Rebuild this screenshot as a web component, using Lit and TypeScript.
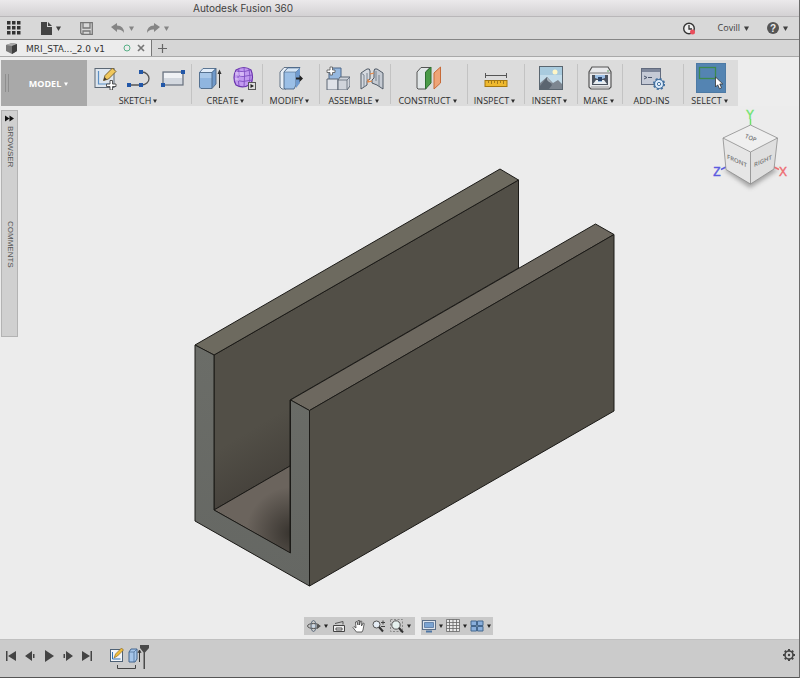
import { LitElement, html, css, svg, TemplateResult } from "lit";
import { customElement, property } from "lit/decorators.js";

const icon = (w: number, h: number, body: TemplateResult | TemplateResult[]) =>
  html`<svg width=${w} height=${h} viewBox="0 0 ${w} ${h}" aria-hidden="true">${body}</svg>`;

const caret = html`<svg class="caret" width="5" height="5" viewBox="0 0 5 5" aria-hidden="true"><path d="M0 .5h5L2.5 5z" fill="currentColor" /></svg>`;

const blueBox = svg`
  <path d="M1 6 5 2h13l-4 4v16l-2 1H2l-1-1z" fill="#a9c8e9" />
  <path d="M2 12h12v10H2z" fill="#8fb5df" />
  <path d="M1 6 5 2h13l-4 4z" fill="#e3eefa" />
  <path d="M14 6l4-4v16l-4 4z" fill="#6f99cb" />
  <path d="M1.500 6.500h12.500v16H3l-1.500-1.500zM1.500 6.500 5 2.500h13v15.500l-4 4.500M14 6.500l4-4" fill="none" stroke="#4d6887" stroke-width=".9" stroke-linejoin="round" />`;

const icons = {
  sketch: icon(24, 24, svg`
    <rect x="2" y="2.500" width="19" height="19" fill="#dfe6ee" stroke="#5c6875" />
    <path d="M5.500 5v13h12" fill="none" stroke="#5b8fc4" stroke-width="1.200" />
    <path d="M10.500 14.500l1.500-5 7.500-7.500 3.500 3.500-7.500 7.500z" fill="#f0c75c" stroke="#6f5726" stroke-width=".9" />
    <path d="M10.500 14.500l1-3.500 2.500 2.500z" fill="#473d30" />
    <path d="M17 14.500h2.500v3.500H23v2.500h-3.500V24H17v-3.500h-3.500V18H17z" fill="#fff" stroke="#444" stroke-width=".9" />`),
  arc: icon(24, 24, svg`
    <path d="M2 19h13a7 6.500 0 0 0 0-13" fill="none" stroke="#555" stroke-width="1.300" />
    <path d="M0 17h4v4H0zM12 17h4v4h-4zM12 4h4v4h-4z" fill="#2257a8" />`),
  rect: icon(24, 24, svg`
    <rect x="2" y="6" width="20" height="13" fill="#d3d8df" stroke="#666f7c" stroke-width="1.200" />
    <rect x="3" y="7" width="18" height="5" fill="#eff1f4" />
    <path d="M0 17h4v4H0zM20 4h4v4h-4z" fill="#2257a8" />`),
  extrude: icon(24, 24, svg`${blueBox}
    <path d="M21.500 22V5" stroke="#333" /><path d="M19.500 8l2-4.500 2 4.500z" fill="#333" />`),
  form: icon(24, 24, svg`
    <path d="M4 4q8-5 15 0 3 7 0 14-8 5-15 1-4-7 0-15z" fill="#c29af0" stroke="#6a35ad" stroke-width="1.200" />
    <path d="M2 9q9 3 18 0M2 14q9 3 18 0M7 2q-2 9 0 18M12 1q1 10 0 20M17 3q2 8 0 16M5 5q7 2 13-1" fill="none" stroke="#7f4fc2" stroke-width=".9" />
    <path d="M3 6h4v4H3zM8 6h4v4H8zM3 12h4v3H3z" fill="#e2cdfa" opacity=".6" />
    <rect x="16.500" y="16.500" width="7" height="7" fill="#ddd" stroke="#555" /><path d="M18.500 18v4l3.500-2z" fill="#222" />`),
  modify: icon(24, 24, svg`
    <path d="M1 6 5 1.500h6L7 6v17H3l-2-2z" fill="#e8eef5" stroke="#56667a" stroke-width=".9" />
    <path d="M5 6 9 1.500h12L17 6v13l-2 4H6l-1-1z" fill="#9bbfe6" stroke="#4a6586" stroke-width=".9" />
    <path d="M5 6 9 2h12l-4 4z" fill="#d5e5f6" stroke="#4a6586" stroke-width=".6" />
    <path d="M17 6l4-4v15l-4 5z" fill="#6f9ace" />
    <path d="M17 11.500h3.500V9l3.500 3.500-3.500 3.500v-2.500H17z" fill="#222" />`),
  component: icon(24, 24, svg`
    <path d="M3 5 6 2h9v10l-2 2H3z" fill="#96b8df" stroke="#4d6788" />
    <path d="M1 13h11v11H1z" fill="#dfe2e8" stroke="#5d6775" />
    <path d="M12 14l2-3h10v9l-3 4h-9z" fill="#d0d4db" stroke="#5d6775" />
    <path d="M12 14h9l3-3M21 14v9" fill="none" stroke="#5d6775" stroke-width=".8" />
    <path d="M4 1h2.500v3H9v2.500H6.500V9H4V6.500H1V4h3z" fill="#fff" stroke="#555" stroke-width=".8" />`),
  joint: icon(24, 24, svg`
    <path d="M1 7 7 3q3-1 3 2v8l-3 2v4l-6 4z" fill="#d5d9df" stroke="#505a66" />
    <path d="M1 7l3 2v12M7 15V7" fill="none" stroke="#7b8591" />
    <path d="M23 7l-6-4q-3-1-3 2v7l-2 2v3l5 2 6 4z" fill="#c6cbd3" stroke="#505a66" />
    <path d="M19 9v11M16 5v10" fill="none" stroke="#7b8591" />
    <path d="M10 8l4-1M8 13v3l4-1" fill="none" stroke="#e88743" stroke-width="1.200" />`),
  construct: icon(26, 24, svg`
    <path d="M1 6 5 1.500h9L10 6v17H2l-1-1z" fill="#e1e6e7" stroke="#555" />
    <path d="M9.500 6l5.500-5v16l-5.500 6z" fill="#4a9b48" stroke="#2c6f31" />
    <path d="M18 7l6.500-6v16L18 23z" fill="#eea477" stroke="#c66a38" />`),
  inspect: icon(24, 24, svg`
    <path d="M1 9.500h22M1.500 7v5M22.500 7v5" stroke="#555" fill="none" />
    <rect x="1" y="14.500" width="22" height="6" fill="#efb92e" stroke="#a5780f" />
    <path d="M4.500 15v2M7.500 15v3M10.500 15v2M13.500 15v3M16.500 15v2M19.500 15v3" stroke="#a37b1c" />`),
  insert: icon(24, 24, svg`
    <rect x=".5" y=".5" width="23" height="23" fill="#c3dcea" stroke="#5a6670" />
    <rect x="1" y="1" width="22" height="8" fill="#a9cbde" />
    <circle cx="16" cy="6" r="2.500" fill="#fff6c6" />
    <path d="M1 17l7-6 6 6 5-3 4 4v5H1z" fill="#7d8690" /><path d="M1 20l7-9 5 8-3 4H1z" fill="#5b6570" />
    <path d="M8 11l5 6-3-1-2-2z" fill="#a8b1b9" />`),
  make: icon(24, 24, svg`
    <path d="M4 1h16l3 5v15l-2 2H3l-2-2V6z" fill="#e8e9eb" stroke="#555" stroke-width="1.200" />
    <path d="M1 7h22" stroke="#777" /><circle cx="20" cy="5" r=".8" fill="#4b9b4b" />
    <path d="M4 9h16v10H4z" fill="#4b535e" /><path d="M5 18l3-4h8l3 4z" fill="#e9eef2" />
    <path d="M7 9h10v3l-3 1v3h-4v-3l-3-1z" fill="#9ec1e5" /><path d="M10 11h4v4h-4z" fill="#2b4468" />
    <path d="M3 21h18" stroke="#999" />`),
  addins: icon(24, 24, svg`
    <rect x=".5" y="2.500" width="19" height="16" fill="#c5cad6" stroke="#626b7e" /><path d="M1 3h18v3H1z" fill="#7e879b" />
    <path d="M3 10l3 1.500L3 13M7 11.500h4" fill="none" stroke="#4a556b" />
    <circle cx="18" cy="18" r="4.500" fill="#dcebfa" stroke="#43709f" stroke-width="1.200" />
    <circle cx="18" cy="18" r="5.200" fill="none" stroke="#43709f" stroke-width="1.800" stroke-dasharray="2.100 1.980" />
    <circle cx="18" cy="18" r="1.600" fill="#fff" stroke="#43709f" />`),
  select: icon(30, 30, svg`
    <rect x="3.500" y="4.500" width="16" height="11" fill="none" stroke="#3c8a4e" stroke-width="1.300" />
    <path d="M19.500 14v10l2.200-2.200 1.800 4 2-1-1.700-3.800h3z" fill="#fff" stroke="#333" stroke-width=".8" />`),
};

interface Tool { name: string; id: keyof typeof icons; on?: boolean }
interface Group { label: string; tools: Tool[]; menu?: boolean }

const groups: Group[] = [
  { label: "SKETCH", tools: [{ name: "Create sketch", id: "sketch" }, { name: "Line", id: "arc" }, { name: "Rectangle", id: "rect" }], menu: true },
  { label: "CREATE", tools: [{ name: "Extrude", id: "extrude" }, { name: "Create form", id: "form" }], menu: true },
  { label: "MODIFY", tools: [{ name: "Press pull", id: "modify" }], menu: true },
  { label: "ASSEMBLE", tools: [{ name: "New component", id: "component" }, { name: "Joint", id: "joint" }], menu: true },
  { label: "CONSTRUCT", tools: [{ name: "Offset plane", id: "construct" }], menu: true },
  { label: "INSPECT", tools: [{ name: "Measure", id: "inspect" }], menu: true },
  { label: "INSERT", tools: [{ name: "Decal", id: "insert" }], menu: true },
  { label: "MAKE", tools: [{ name: "3D print", id: "make" }], menu: true },
  { label: "ADD-INS", tools: [{ name: "Scripts and add-ins", id: "addins" }] },
  { label: "SELECT", tools: [{ name: "Select", id: "select", on: true }], menu: true },
];

const base = css`
  :host, * { box-sizing: border-box; }
  button {
    border: 0; margin: 0; padding: 0; background: none; color: inherit; font: inherit;
    display: flex; align-items: center; justify-content: center; cursor: default;
  }
  svg { display: block; flex: none; }
`;

@customElement("top-bar")
class TopBar extends LitElement {
  static styles = [base, css`
    :host { display: block; }
    .title {
      height: 17px; padding-left: 193px; border-bottom: 1px solid #b9b7b9;
      background: linear-gradient(#ebe9eb, #d3d1d3);
      font: 10px/17px "Inter", sans-serif; color: #3f3f3f;
    }
    .quick {
      height: 23px; padding: 0 11px 0 7px; display: flex; align-items: center;
      background: #d8d8d8; border-bottom: 1px solid #858585; color: #414141;
    }
    .quick button { gap: 4px; }
    .file { margin-left: 20px; }
    .save { margin-left: 19px; color: #777; }
    .undo { margin-left: 18px; color: #858585; }
    .redo { margin-left: 12px; color: #858585; }
    .clock { margin-left: auto; }
    .user { margin-left: 22px; font: 9px/12px "Open Sans", sans-serif; }
    .help { margin-left: 18px; }
    .tabs { height: 17px; display: flex; background: #d6d6d6; border-bottom: 1px solid #a9a9a9; }
    .tab {
      width: 152px; padding: 0 6px 0 5px; display: flex; align-items: center;
      background: #ececec; border-right: 1px solid #777; color: #333;
    }
    .name { margin: 2px auto 0 8px; font: 9px/14px "DejaVu Sans", sans-serif; white-space: nowrap; }
    .close { margin-left: 6px; }
    .new { width: 20px; }
  `];

  render() {
    return html`
      <header class="title">Autodesk Fusion 360</header>
      <nav class="quick" aria-label="Quick access">
        <button aria-label="Data panel">${icon(14, 14, svg`<path d="M0 0h3.500v3.500H0zM5 0h3.500v3.500H5zM10 0h3.500v3.500H10zM0 5h3.500v3.500H0zM5 5h3.500v3.500H5zM10 5h3.500v3.500H10zM0 10h3.500v3.500H0zM5 10h3.500v3.500H5zM10 10h3.500v3.500H10z" fill="#333" />`)}</button>
        <button class="file" aria-label="File">${icon(11, 13, svg`<path d="M0 0h6v5h5v8H0zM7 0l4 4H7z" fill="#444" />`)}${caret}</button>
        <button class="save" aria-label="Save">${icon(13, 13, svg`<path d="M.7.7h11.600v11.600H2L.7 11zM3 1v5h7V1M3 12V9h7v3" fill="none" stroke="#777" stroke-width="1.300" />`)}</button>
        <button class="undo" aria-label="Undo">${icon(14, 10, svg`<path d="M0 4l6-4v2.500q7 0 7 7.500-2-4-7-3.500V9z" fill="#858585" />`)}${caret}</button>
        <button class="redo" aria-label="Redo">${icon(14, 10, svg`<path d="M14 4L8 0v2.500Q1 2.500 1 10q2-4 7-3.500V9z" fill="#858585" />`)}${caret}</button>
        <button class="clock" aria-label="Job status">${icon(13, 13, svg`<circle cx="6" cy="6.500" r="5.300" fill="#eee" stroke="#333" stroke-width="1.400" /><path d="M6 3v4h3" fill="none" stroke="#333" stroke-width="1.300" /><circle cx="9.500" cy="10" r="2.500" fill="#e94f5c" />`)}</button>
        <button class="user">Covill ${caret}</button>
        <button class="help" aria-label="Help">${icon(12, 12, svg`<circle cx="6" cy="6" r="6" fill="#555" /><text x="6" y="9.500" text-anchor="middle" font-family="Liberation Sans" font-weight="bold" font-size="10" fill="#eee">?</text>`)}${caret}</button>
      </nav>
      <div class="tabs">
        <div class="tab">
          ${icon(13, 13, svg`<path d="M1 3l6-2 5 1v7l-5 3-6-3z" fill="#777" /><path d="M1 3l6-2 5 1-5 2z" fill="#aaa" /><path d="M7 4l5-2v7l-5 3z" fill="#3f3f3f" />`)}
          <span class="name">MRI_STA..._2.0 v1</span>
          ${icon(8, 8, svg`<circle cx="4" cy="4" r="3" fill="none" stroke="#58b087" />`)}
          <button class="close" aria-label="Close tab">${icon(8, 8, svg`<path d="M1 1l6 6M7 1L1 7" stroke="#777" stroke-width="1.700" />`)}</button>
        </div>
        <button class="new" aria-label="New tab">${icon(9, 9, svg`<path d="M4.500 0v9M0 4.500h9" stroke="#666" stroke-width="1.200" />`)}</button>
      </div>`;
  }
}

@customElement("tool-ribbon")
class ToolRibbon extends LitElement {
  static styles = [base, css`
    :host { display: block; padding: 3px 0 0 1px; background: #ededed; }
    .ribbon {
      width: max-content; height: 46px; display: grid; background: #dcdcdc;
      grid-template-columns: 86px 104px 71px 57px 71px 77px 57px 53px 45px 61px 55px;
      font: 9px/10px "Open Sans", sans-serif; color: #2c2c2c;
    }
    .mode {
      position: relative; background: #a9a9a9; color: #fff; gap: 3px; padding-left: 9px;
      font-weight: bold;
    }
    .grip { position: absolute; left: 4px; top: 14px; width: 4px; height: 18px; border: solid #8e8e8e; border-width: 0 1px; }
    .group { position: relative; display: flex; flex-direction: column; align-items: center; justify-content: space-between; padding-bottom: 1px; }
    .group + .group::before { content: ""; position: absolute; left: 0; top: 4px; bottom: 3px; width: 1px; background: #c3c3c3; }
    .tools { height: 36px; display: flex; gap: 10px; align-items: center; }
    .on { background: #5484b2; outline: 1px solid #4d7aa5; outline-offset: -1px; }
    .menu { height: 10px; gap: 2px; margin-right: 2px; }
    .caret { width: 4px; height: 4px; }
  `];

  render() {
    return html`<div class="ribbon" role="toolbar" aria-label="Model tools">
      <button class="mode"><span class="grip"></span>MODEL ${caret}</button>
      ${groups.map((g) => html`<div class="group">
        <div class="tools">${g.tools.map((t) => html`<button class=${t.on ? "on" : ""} aria-label=${t.name}>${icons[t.id]}</button>`)}</div>
        <button class="menu">${g.label}${g.menu ? caret : ""}</button>
      </div>`)}
    </div>`;
  }
}

@customElement("model-stage")
class ModelStage extends LitElement {
  static styles = [base, css`
    :host { display: flex; flex-direction: column; justify-content: space-between; position: relative; min-height: 460px; background: #ececec; }
    .rail {
      width: 17px; height: 227px; margin: 4px 0 0 1px; padding-top: 4px; position: relative; z-index: 1;
      display: flex; flex-direction: column; align-items: center;
      background: #d0d0d0; border: 1px solid #b3b3b3; color: #555;
      font: 8px/12px "Liberation Sans", sans-serif;
    }
    .rail button { writing-mode: vertical-rl; }
    .browser { margin-top: 4px; }
    .comments { margin-top: 54px; }
    .model { position: absolute; inset: 0; margin: auto; }
    .cube { position: absolute; top: 0; right: 9px; }
    .views { position: relative; z-index: 1; display: flex; justify-content: center; gap: 6px; padding: 0 3px 4px 0; color: #222; }
    .bar { height: 18px; display: flex; background: #c9c9c9; }
    .first { padding: 0 2px; }
    .bar button { width: 20px; gap: 3px; }
    .bar .drop { width: 24px; }
    .bar .tight { width: 23px; }
    .caret { width: 4px; height: 4px; }
  `];

  render() {
    const view = (name: string, cls: string, body: TemplateResult) =>
      html`<button class=${cls} aria-label=${name}>${icon(14, 14, body)}${cls ? caret : ""}</button>`;
    return html`
      <svg class="model" width="439" height="445" viewBox="180 150 439 445" role="img" aria-label="U-shaped channel model">
        <defs>
          <linearGradient id="inner" gradientUnits="userSpaceOnUse" x1="300" y1="400" x2="330" y2="450">
            <stop offset="0" stop-color="#524f47" /><stop offset="1" stop-color="#45413b" />
          </linearGradient>
          <radialGradient id="floor" gradientUnits="userSpaceOnUse" cx="292" cy="533" r="46">
            <stop offset="0" stop-color="#37332e" /><stop offset="1" stop-color="#6b645d" />
          </radialGradient>
          <linearGradient id="front" x1="0" y1="0" x2="0" y2="1">
            <stop offset="0" stop-color="#6b6d68" /><stop offset="1" stop-color="#656763" />
          </linearGradient>
        </defs>
        <g stroke="#1b1a17" stroke-width="1" stroke-linejoin="round">
          <path d="M214 355 518.500 180V268L290 400V466L214 510z" fill="url(#inner)" />
          <path d="M195 345 500 169 518.500 180 214 355z" fill="#6d6a5f" />
          <path d="M214 510 290 466V553z" fill="url(#floor)" />
          <path d="M290.500 400 595.500 224 614 234.500 309.500 410.500z" fill="#6d685f" />
          <path d="M309.500 410.500 614 234.500V411L309.500 586z" fill="#524f47" />
          <path d="M195 345 214 355V510L290.500 553V400L309.500 410.500V586L195 521z" fill="url(#front)" />
        </g>
      </svg>
      <svg class="cube" width="80" height="90" viewBox="710 106 80 90" role="img" aria-label="View cube">
        <defs><filter id="soft" x="-30%" y="-30%" width="160%" height="160%"><feGaussianBlur stdDeviation="2" /></filter></defs>
        <path d="M724 170 750 188 778 170 750 160z" fill="#8c8c8c" opacity=".75" filter="url(#soft)" />
        <path d="M750.500 125v-6" stroke="#6ee46e" stroke-width="1.500" />
        <path d="M726 167l-5 2.500" stroke="#5b5be0" stroke-width="1.500" />
        <path d="M774 167l5 2.500" stroke="#ee6a70" stroke-width="1.500" />
        <path d="M723 138 750.500 152V184L726 169.500z" fill="#e6e6e6" />
        <path d="M750.500 152 777.500 138 774 169 750.500 184z" fill="#dfdfdf" />
        <path d="M750.500 125 777.500 138 750.500 152 723 138z" fill="#efefef" />
        <path d="M750.500 125 777.500 138 774 169 750.500 184 726 169.500 723 138zM723 138l27.500 14 27-14M750.500 152v32" fill="none" stroke="#8b8b8b" stroke-width=".8" />
        <g font-family="Open Sans, sans-serif" font-size="6" font-weight="600" fill="#777" text-anchor="middle">
          <text transform="translate(737 163) skewY(24)">FRONT</text>
          <text transform="translate(763 163) skewY(-24)">RIGHT</text>
          <text transform="translate(750 140) rotate(22)">TOP</text>
        </g>
        <g font-family="Liberation Sans, sans-serif" font-size="12" text-anchor="middle" stroke-width=".4">
          <text x="750" y="119" fill="#6ee46e" stroke="#6ee46e">Y</text>
          <text x="717" y="176" fill="#5b5be0" stroke="#5b5be0">Z</text>
          <text x="783" y="176" fill="#ee6a70" stroke="#ee6a70">X</text>
        </g>
      </svg>
      <aside class="rail">
        ${icon(9, 7, svg`<path d="M0 .5l4.500 3L0 6.500zM4.500.5l4.500 3-4.500 3z" fill="#111" />`)}
        <button class="browser">BROWSER</button>
        <button class="comments">COMMENTS</button>
      </aside>
      <div class="views">
        <div class="bar first" role="toolbar" aria-label="Navigation">
          ${view("Orbit", "tight", svg`<ellipse cx="6.500" cy="7" rx="6" ry="2.500" fill="none" stroke="#555" /><ellipse cx="6.500" cy="7" rx="2.500" ry="5.500" fill="none" stroke="#5c6b7c" /><path d="M10 5l4 2-4 3z" fill="#555" /><circle cx="6.500" cy="7" r="1.500" fill="#c9d9ea" />`)}
          ${view("Look at", "", svg`<path d="M1.500 6.500h11v6h-11z" fill="#eee" stroke="#444" /><path d="M3 4.500l8-2v3M4 9h6v2H4z" fill="none" stroke="#555" />`)}
          ${view("Pan", "", svg`<path d="M4.500 13L1 8.500l1-1 2 1.500L3.500 3l1.200-.6L6 6V1.500h1.500V6l1-4 1.300.3L9.500 7l1.700-3 1 .5L11 11l-1 2z" fill="#fff" stroke="#444" stroke-width=".8" />`)}
          ${view("Zoom", "", svg`<circle cx="4.500" cy="5.500" r="3.500" fill="#e5edf5" stroke="#555" /><path d="M7 8l4 4.500" stroke="#333" stroke-width="2" /><path d="M9 3.500h4M11 1.500v4M9 7.500h4" stroke="#444" />`)}
          ${view("Fit", "drop", svg`<path d="M.5.5h12v12H.5z" fill="none" stroke="#888" stroke-dasharray="2 1.500" /><circle cx="6" cy="6" r="4.200" fill="#e5f0ee" stroke="#555" /><path d="M9 9l4 4.500" stroke="#333" stroke-width="2" />`)}
        </div>
        <div class="bar" role="toolbar" aria-label="Display">
          ${view("Display settings", "drop", svg`<rect x=".5" y="1.500" width="13" height="9" fill="#dce4ee" stroke="#5c6f88" /><path d="M2.500 3.500h9v5h-9z" fill="#7ba4d3" stroke="#496a95" stroke-width=".7" /><path d="M4 12.500h6" stroke="#4f76a5" stroke-width="2" />`)}
          ${view("Grid settings", "drop", svg`<path d="M.5.500h13v12H.5z" fill="#e9e9e9" /><path d="M.5.500h13v12H.5zM.5 3.500h13M.5 6.500h13M.5 9.500h13M3.500.5v12M7 .5v12M10.500.5v12" fill="none" stroke="#666" stroke-width=".8" />`)}
          ${view("Viewports", "drop", svg`<path d="M1 2h5.500v4.500H1zM7.500 2H13v4.500H7.500zM1 7.500h5.500V12H1zM7.500 7.500H13V12H7.500z" fill="#8aafdc" stroke="#45688f" />`)}
        </div>
      </div>`;
  }
}

@customElement("time-line")
class TimeLine extends LitElement {
  @property({ type: Number }) step = 2;

  static styles = [base, css`
    :host { height: 39px; display: flex; align-items: flex-start; padding: 3px 3px 0; background: #cbcbcb; border-bottom: 1px solid #555; border-top: 1px solid #c0c0c0; }
    .play { display: flex; gap: 3px; margin-top: 5px; }
    .play button { width: 16px; height: 16px; }
    .history { margin-left: 13px; }
    .prefs { margin: 5px 0 0 auto; height: 14px; }
  `];

  render() {
    const btn = (name: string, d: string) => html`<button aria-label=${name}>${icon(12, 12, svg`<path d=${d} fill="#444" />`)}</button>`;
    return html`
      <div class="play">
        ${btn("Go to start", "M1 1h1.500v10H1zM11 1v10L3 6z")}
        ${btn("Step back", "M8 1v10L1 6zM9 4h1.500v4H9z")}
        ${btn("Play", "M2 0l9 6-9 6z")}
        ${btn("Step forward", "M4 1l7 5-7 5zM1.500 4H3v4H1.500z")}
        ${btn("Go to end", "M1 1l8 5-8 5zM9.500 1H11v10H9.500z")}
      </div>
      <svg class="history" width="42" height="28" viewBox="108 643 42 28" role="img" aria-label="Timeline, ${this.step} features">
        <rect x="110.500" y="649.500" width="12" height="12" fill="#f2f4f7" stroke="#4e6175" />
        <path d="M112.500 652v7h8" fill="none" stroke="#2f73b5" />
        <path d="M114 658l1.500-4 6-6 2 2-6 6z" fill="#f0bd3a" stroke="#7a5b21" stroke-width=".6" />
        <path d="M129 652l2-3h6v10l-2 3h-6z" fill="#a5c5ea" stroke="#45678f" /><path d="M129 652h5v10M134 652l3-3" fill="none" stroke="#45678f" stroke-width=".7" />
        <path d="M139.500 662v-11M138 653l1.500-3 1.500 3" fill="none" stroke="#333" />
        <path d="M117.500 665v3.500h18V665" fill="none" stroke="#444" />
        <path d="M140 645h9v3l-4 4.500V669h-1.500v-16.500L140 648z" fill="#4b4b4b" />
      </svg>
      <button class="prefs" aria-label="Preferences">${icon(14, 14, svg`<circle cx="7" cy="7" r="4" fill="none" stroke="#444" stroke-width="1.600" /><circle cx="7" cy="7" r="1.200" fill="#444" /><path d="M7 1v2M7 11v2M1 7h2M11 7h2M2.800 2.800l1.400 1.400M9.800 9.800l1.400 1.400M2.800 11.200l1.400-1.400M9.800 4.200l1.400-1.400" stroke="#444" stroke-width="2" />`)}</button>`;
  }
}

@customElement("app-root")
class AppRoot extends LitElement {
  static styles = css`
    :host { display: flex; flex-direction: column; min-height: 100vh; box-sizing: border-box; border-right: 1px solid #6b6b6b; background: #ececec; }
    .stage { flex: 1; }
  `;

  render() {
    return html`<top-bar></top-bar><tool-ribbon></tool-ribbon><model-stage class="stage"></model-stage><time-line></time-line>`;
  }
}
